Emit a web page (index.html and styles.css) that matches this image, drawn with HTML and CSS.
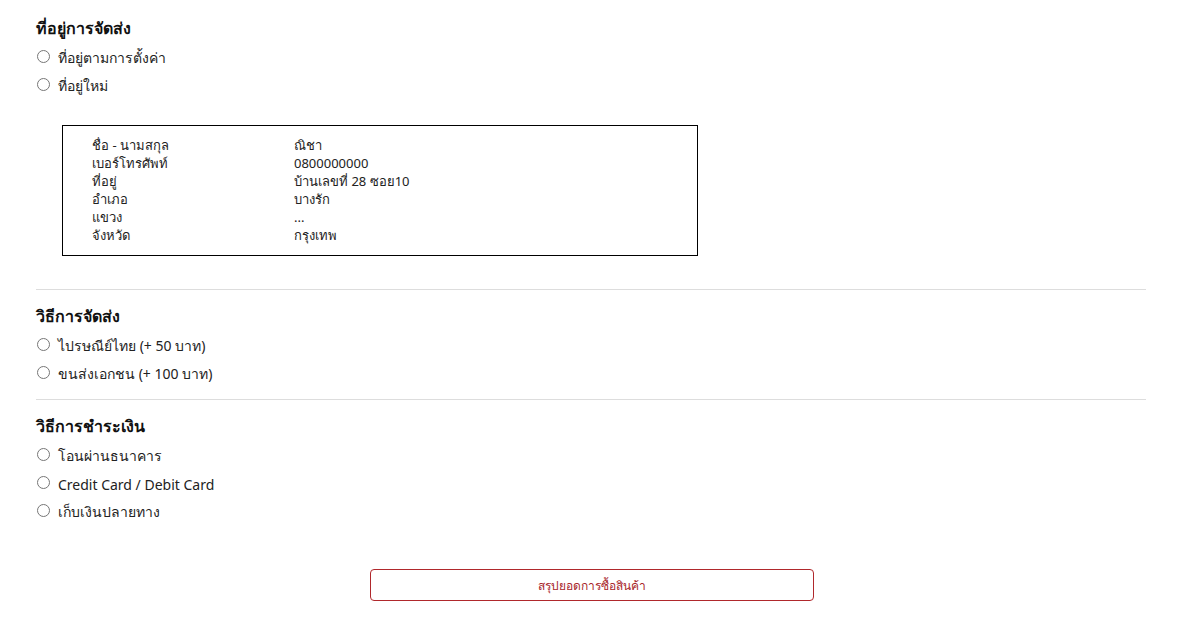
FILE: index.html
```html
<!DOCTYPE html>
<html lang="th">
<head>
    <meta charset="UTF-8">
    <meta name="viewport" content="width=device-width, initial-scale=1.0">
    <title>ชำระเงิน</title>
    <link rel="stylesheet" href="styles.css">
</head>
<body>
    <div class="checkout">
        <section class="section">
            <h3 class="section-title">ที่อยู่การจัดส่ง</h3>
            <label class="option"><input type="radio" name="address"> ที่อยู่ตามการตั้งค่า</label>
            <label class="option"><input type="radio" name="address"> ที่อยู่ใหม่</label>

            <div class="address-box">
                <div class="address-row"><span class="address-label">ชื่อ - นามสกุล</span><span>ณิชา</span></div>
                <div class="address-row"><span class="address-label">เบอร์โทรศัพท์</span><span>0800000000</span></div>
                <div class="address-row"><span class="address-label">ที่อยู่</span><span>บ้านเลขที่ 28 ซอย10</span></div>
                <div class="address-row"><span class="address-label">อำเภอ</span><span>บางรัก</span></div>
                <div class="address-row"><span class="address-label">แขวง</span><span>...</span></div>
                <div class="address-row"><span class="address-label">จังหวัด</span><span>กรุงเทพ</span></div>
            </div>
        </section>

        <hr class="divider">

        <section class="section">
            <h3 class="section-title">วิธีการจัดส่ง</h3>
            <label class="option"><input type="radio" name="shipping"> ไปรษณีย์ไทย (+ 50 บาท)</label>
            <label class="option"><input type="radio" name="shipping"> ขนส่งเอกชน (+ 100 บาท)</label>
        </section>

        <hr class="divider">

        <section class="section">
            <h3 class="section-title">วิธีการชำระเงิน</h3>
            <label class="option"><input type="radio" name="payment"> โอนผ่านธนาคาร</label>
            <label class="option"><input type="radio" name="payment"> Credit Card / Debit Card</label>
            <label class="option"><input type="radio" name="payment"> เก็บเงินปลายทาง</label>
        </section>

        <div class="actions">
            <button class="summary-btn">สรุปยอดการซื้อสินค้า</button>
        </div>
    </div>
</body>
</html>
```

FILE: styles.css
```css
* {
    box-sizing: border-box;
    margin: 0;
    padding: 0;
}

body {
    font-family: "Noto Sans", "Liberation Sans", sans-serif;
    color: #222;
    background: #fff;
}

.checkout {
    padding: 16px 32px 0 36px;
}

.section {
    padding-bottom: 11px;
}

.section-title {
    font-size: 16px;
    font-weight: 600;
    color: #111;
    line-height: 24px;
    margin-bottom: 4px;
}

.option {
    display: flex;
    align-items: center;
    gap: 8px;
    height: 28px;
    font-size: 14px;
}

.option input {
    width: 13px;
    height: 13px;
    margin: 0 0 4px 1px;
}

.address-box {
    width: 636px;
    margin: 25px 0 22px 26px;
    border: 1px solid #000;
    padding: 10px 29px 11px;
    font-size: 13px;
    line-height: 18px;
}

.address-row {
    display: flex;
}

.address-label {
    width: 202px;
}

.divider {
    border: 0;
    border-top: 1px solid #ddd;
    margin: 0 0 14px;
}

.actions {
    display: flex;
    justify-content: center;
    margin-top: 32px;
    padding-left: 2px;
}

.summary-btn {
    width: 444px;
    height: 32px;
    background: #fff;
    border: 1px solid #b0282c;
    border-radius: 4px;
    color: #a8262a;
    font-family: inherit;
    font-size: 12px;
}
```
